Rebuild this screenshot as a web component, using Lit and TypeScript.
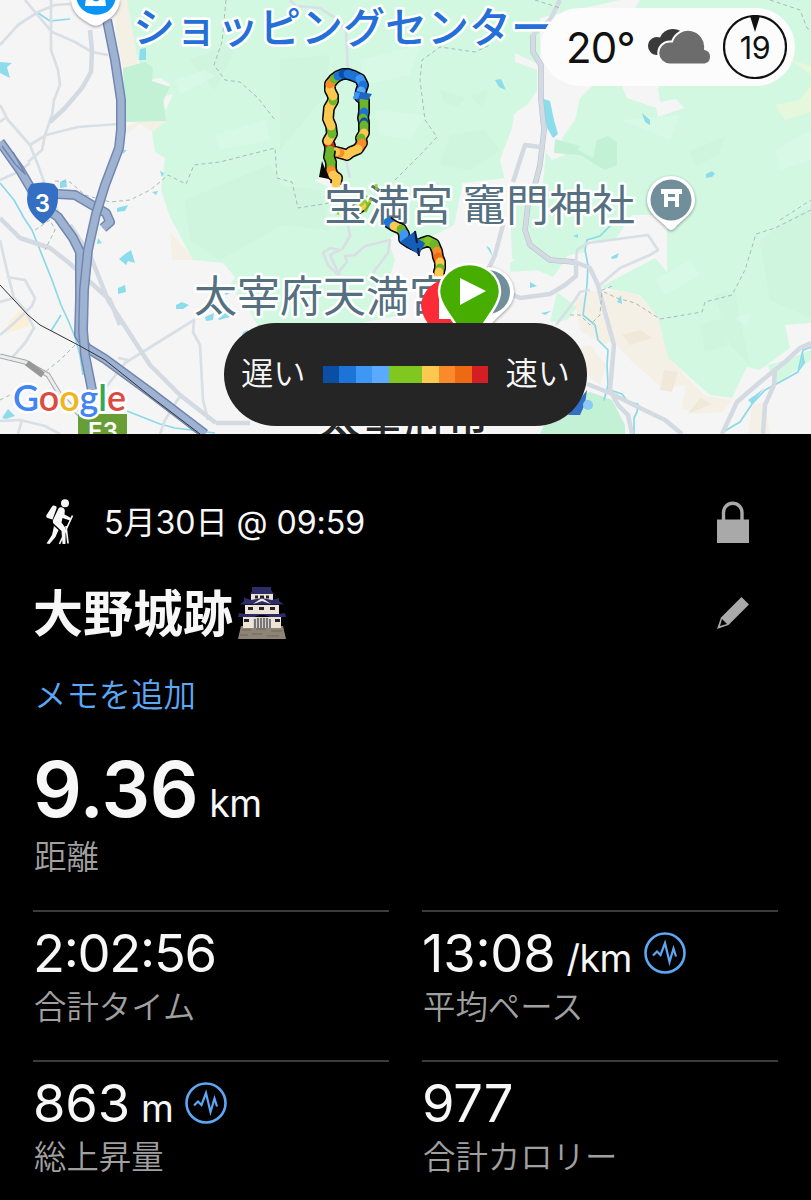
import { LitElement, html, svg, css } from 'lit';
import { customElement, property } from 'lit/decorators.js';

const BLUE4 = '#0b4ea6';
const BLUE3 = '#1c74d6';
const BLUE2 = '#3f97f5';
const BLUE1 = '#5aabff';
const GREEN = '#80c81f';
const LEAF = '#6db52b';
const YELLOW = '#fdc84f';
const ORANGE = '#fb8a2b';
const DEEP = '#ee6a12';
const RED = '#d31f24';

const LEGEND = [BLUE4, BLUE3, BLUE2, BLUE1, GREEN, GREEN, YELLOW, ORANGE, DEEP, RED];

// x, y, colour of the piece that ends at this point
type Point = [number, number, string];

const LOOP: Point[] = [
  [330, 152, ''], [330, 146, LEAF], [328, 141, RED], [332, 134, YELLOW], [331, 126, LEAF],
  [328, 119, YELLOW], [329, 108, YELLOW], [333, 101, YELLOW], [333, 96, LEAF], [330, 90, YELLOW],
  [330, 84, YELLOW], [334, 79, ORANGE], [338, 76, LEAF], [343, 74, BLUE3], [348, 74, BLUE4],
  [354, 76, BLUE3], [360, 79, BLUE3], [363, 85, BLUE2], [361, 91, BLUE3], [360, 97, BLUE1],
  [364, 100, BLUE4], [364, 112, LEAF], [363, 118, BLUE3], [364, 122, LEAF], [364, 125, BLUE4],
  [364, 133, LEAF], [361, 138, YELLOW], [362, 143, LEAF], [358, 149, ORANGE], [351, 152, YELLOW],
  [347, 155, YELLOW], [340, 153, YELLOW], [336, 152, ORANGE], [330, 152, YELLOW],
];

const TRAIL: Point[] = [
  [330, 150, ''], [329, 157, LEAF], [331, 162, LEAF], [331, 170, LEAF], [333, 175, ORANGE],
  [337, 178, YELLOW], [336, 184, YELLOW],
];

const LOWER: Point[] = [
  [388, 222, ''], [394, 226, BLUE3], [401, 229, YELLOW], [404, 234, LEAF], [404, 239, BLUE2],
  [410, 243, BLUE2], [416, 246, BLUE3], [422, 243, BLUE3], [428, 241, LEAF], [434, 244, GREEN],
  [437, 251, LEAF], [438, 257, ORANGE], [440, 262, DEEP], [440, 268, YELLOW], [439, 272, LEAF],
  [439, 278, YELLOW],
];

const toPath = (points: Point[]) => 'M' + points.map(([x, y]) => `${x} ${y}`).join('L');

const route = (points: Point[]) => svg`
  <path class="route-edge" d=${toPath(points)}></path>
  ${points.slice(1).map((p, i) => svg`
    <path class="route-piece" stroke=${p[2]} d="M${points[i][0]} ${points[i][1]}L${p[0]} ${p[1]}"></path>
  `)}
`;

@customElement('activity-map')
export class ActivityMap extends LitElement {
  static styles = css`
    :host {
      display: block;
    }
    svg {
      display: block;
      width: 100%;
      height: 100%;
    }
    text {
      font-family: "Noto Sans CJK JP", sans-serif;
      paint-order: stroke;
      stroke-linejoin: round;
    }
    path {
      stroke-linejoin: round;
    }
    .park { fill: #d3f8e2; }
    .park-dark { fill: #c3f1d5; }
    .shade { fill: #cbf1db; opacity: 0.5; }
    .light { fill: #dbfae8; opacity: 0.6; }
    .gap { fill: #f5f5f5; }
    .sand { fill: #f5f0e5; }
    .sand-dark { fill: #f0e9da; }
    .water { fill: #8ddcec; }
    .river { fill: none; stroke: #8bd9e8; stroke-width: 1.7; }
    .road { fill: none; stroke: #d8dfe5; stroke-width: 2.7; }
    .road-wide { fill: none; stroke: #d3dae1; stroke-width: 4.5; }
    .road-edge { fill: none; stroke: #b3bec9; stroke-width: 5.5; }
    .highway-edge { fill: none; stroke: #7286b1; stroke-width: 10; }
    .highway { fill: none; stroke: #9eb2d1; stroke-width: 7; }
    .rail { fill: none; stroke: #333; stroke-width: 1; }
    .line { fill: none; stroke: #a4a8aa; stroke-width: 5; }
    .line-in { fill: none; stroke: #ececec; stroke-width: 3; }
    .border { fill: none; stroke: #a9bbb2; stroke-width: 1; stroke-dasharray: 4 3; }
    .route-edge { fill: none; stroke: #080808; stroke-width: 12; }
    .route-piece { fill: none; stroke-width: 8.8; stroke-linecap: round; }
    .mall { font-size: 42px; font-weight: 500; fill: #256fd9; stroke: #fff; stroke-width: 5; }
    .shrine { font-size: 43px; fill: #557080; stroke: #fff; stroke-width: 5; }
    .city { font-size: 42px; font-weight: 500; fill: #26282b; stroke: #fff; stroke-width: 4; }
    .shield { font: 600 24px Inter, sans-serif; fill: #fff; text-anchor: middle; }
    .google { font: 600 37px Lato, sans-serif; stroke: #fff; stroke-width: 5; }
    .pin { filter: drop-shadow(0 1px 1.5px rgba(0, 0, 0, 0.4)); }
  `;

  render() {
    return html`
      <svg viewBox="0 0 811 434">
        <rect width="811" height="434" fill="#f5f5f5"></rect>

        <path class="sand" d="M114 0H130L138 68L123 69L117 40Z M125 127L143 120L166 121L158 135L140 124L127 134Z M170 232L195 260L172 260Z"></path>
        <path class="park" d="M127 0H811V323L785 325L790 348L760 370L747 367L732 398L710 395L668 358L658 318L640 295L600 287L655 258L667 272V215L632 215L615 240L600 243L585 238L584 250L567 256L554 276L540 270L510 272L510 245L535 215L540 160V86L512 128L500 160L507 178L463 183L454 225L425 240L400 245L410 275L385 285L402 315L345 326H258L243 300L228 288L235 277L223 263L193 260L170 217L161 190L165 158L155 152L152 132L166 121L137 57Z"></path>
        <path class="gap" d="M540 18L620 0H640L634 10L660 86L658 88L660 102L676 99L684 108L658 117L656 108L627 98L622 86L592 86L580 98L575 120L562 138L565 155L552 160L546 152L540 215L514 260L500 272L470 260L465 240L462 183L505 180L500 160L520 152L537 126L512 129L514 114L537 98V70L515 62V53L540 65Z"></path>
        <path class="gap" d="M151 80L160 78L170 84L168 88L151 83Z M166 96L173 94L166 110L163 104Z M314 180L328 175L345 186L334 190Z M388 240L408 226L425 265L462 262L455 326H410L400 300L385 292L395 260Z"></path>
        <path class="park" d="M510 205L544 190L575 195L618 225L606 241L588 237L584 252L567 256L553 277L532 268L512 258Z"></path>
        <path class="park-dark" d="M123 68L145 62L153 68L152 81L170 87L163 100L166 121L125 122Z M555 139L580 146L578 150L593 158L597 140L608 136L617 142V165L605 170L580 155L554 153Z"></path>
        <path class="park" d="M557 292L577 307L567 320L550 322Z M768 365L786 360L811 350V360L775 385Z"></path>
        <path class="park-dark" d="M556 400L590 392L612 400L625 425V434H540Z"></path>
        <path class="sand" d="M575 300L590 291H625L640 296L658 318L668 358L704 395L732 400L723 412L695 414L682 408L686 385L662 388L632 362L612 340L603 345L580 330Z M570 350L590 345L606 365L600 385L590 378Z M752 405L765 402L770 434H748Z"></path>
        <path class="sand-dark" d="M622 335L640 330L652 338L630 345Z M664 370L678 372L672 392L660 390Z M700 398L712 404L688 414Z"></path>
        <path fill="#fbf0d6" d="M10 320L25 306L30 325L5 334Z"></path>
        <path fill="#e5f8db" d="M775 105L800 100L811 85V112L785 120Z M790 60L811 66V74Z"></path>

        <path class="shade" d="M280 60L330 55L325 95L280 150Z M185 200L270 165L300 215L220 260L190 240Z M270 185L320 190L330 230L280 225Z M440 90L465 98L457 106L445 103Z M450 135L485 130L500 150L470 170L440 165Z M470 95L488 90L482 108Z M690 151L725 137L718 155L695 166Z M715 295L735 290L742 330L750 365L730 345Z M760 240L811 205V318L770 300Z M700 325L722 318L728 345L705 352Z M190 60L240 40L215 90Z"></path>
        <path class="light" d="M175 80L205 70L215 76L180 95Z M215 135L265 120L270 140L220 150Z M360 60L420 45L410 75L365 85Z M375 110L425 115L410 140L380 135Z M620 120L680 115L670 140Z M655 280L690 260L700 275L665 295Z M735 318L752 312L746 326Z M775 150L811 130V160L780 170Z M700 20L745 10L735 40Z"></path>

        <path class="water" d="M140 49L146 48V60L139 60Z M0 62L12 63L7 67L10 78L0 73Z M60 182L66 179L67 187L60 188Z M122 150H127L123 154Z M160 171L164 173L162 177Z M152 192L158 191L156 195Z M117 208L128 205L125 211L117 212Z M98 238L102 243L97 244Z M125 254L131 250L135 263L128 261L126 265L119 259Z M118 288L125 285L126 292L118 294Z M176 305L182 302L189 305L183 309H176Z M205 317L214 313L213 320L206 321Z M218 319L226 310L230 317L219 320Z M243 332L248 330V335L242 336Z M224 292L230 293L226 295Z M2 418L8 409L15 416L6 419Z M495 80L501 79L506 90L499 87Z M541 98L550 101L554 120L558 134L553 138L547 128Z M642 113L650 120V125L645 122Z M706 174L712 171L715 174L712 177L706 178Z M486 246L490 248L493 257Z M573 236L578 234V238Z M611 257L619 253L617 258L612 259Z M530 282L537 286L530 288Z M541 313L551 311L545 315Z M617 302L621 295L622 304Z M801 365L803 352L805 363L800 370L780 383L797 372Z M748 400L758 393L764 388L752 404Z"></path>

        <path class="river" d="M0 183L14 200L23 216 M22 215L32 230L40 250L52 280L61 305L68 320L75 337L80 355L83 375 M61 315L51 331 M127 411L160 424L175 428L215 433 M38 13L50 21L70 19"></path>
        <path class="river" d="M611 225L600 236L587 240L585 250L588 265L587 285L583 315L595 325L598 340L608 350L607 365L608 385L604 400L607 390 M610 390L622 394L628 402L638 404L637 412L634 418V434 M723 432L740 422L752 404L765 390L780 382L798 372L803 350L811 347"></path>

        <path class="road" d="M0 45L18 25L38 12L55 5L70 4 M25 0L40 18L52 32L75 42L92 52L108 55 M51 0V50L58 70L60 85L54 100L52 115L45 135L42 150L28 162 M30 145L46 135L78 127L118 124 M0 122L5 118 M0 105L8 120L30 145L38 165L47 190L65 225 M0 180L18 172L30 163"></path>
        <path class="road" d="M0 240L8 275L14 298L0 302 M7 277L25 280L35 298L32 306L12 325L0 335 M14 298L25 310L34 328L25 343L10 360 M0 421L20 420L45 426L60 434 M100 395L125 363L194 320L193 332L200 345L203 400L208 420 M118 358L128 360 M180 396L165 420L160 434 M290 0L296 6L320 8L335 18L346 30L348 72 M346 160L350 178 M22 420L18 434"></path>
        <path class="road" d="M340 275L337 270L330 255L340 250L330 248L323 253L328 265L337 274L347 262L345 256L355 255L365 246L390 240L388 253L375 270L370 280 M348 225L350 236L342 250"></path>
        <path class="road-wide" d="M90 30L92 50L91 72L82 88L65 108L50 122 M0 218L20 238L50 248L68 262L110 300L120 325 M70 225L90 255L108 300L150 365L180 395L216 423 M216 423H250"></path>
        <path class="road-edge" d="M533 35V52L541 65V100L544 130L540 165L535 185L528 205L525 230L530 245L550 260L575 262"></path>
        <path class="road-wide" d="M560 0L550 20L533 35V52L541 65V100L544 130L540 165L535 185L528 205L525 230L530 245L550 260L575 262L590 268L598 285L603 305L614 345L610 390L618 405L628 415L632 434 M503 225L495 255L488 270 M540 147L525 145L513 182 M576 262V276L565 285L550 294L520 298L490 285"></path>
        <path class="road" d="M590 290L580 292L575 300L556 325 M576 262L577 250L588 243L648 235L658 250L650 255L620 268L600 285"></path>
        <path class="road-wide" d="M587 384L610 393L640 408L665 420L682 434 M722 434L737 402L760 382L785 362L800 348L811 343 M775 370L774 385L765 405L763 434"></path>
        <path class="border" d="M226 0L222 42L214 65L225 80L240 82L258 98L275 120 M55 181L70 182L85 195L110 202L130 200L150 190L160 182L168 175L186 184L194 165L220 162L275 148L277 178L292 182L298 208L330 203 M395 180L420 155L437 137L425 120L420 80L422 60L440 47L475 52L490 45 M535 0L560 8 M770 0L800 10L807 28L811 30 M780 220L811 200 M811 210L775 228L756 234L745 270L732 295L705 302L702 312L660 319L635 303L617 298L604 292 M570 315H580L590 325L600 315L602 290L615 285 M75 345L60 360L45 372 M0 400L10 395 M35 230L50 220L55 230L45 250"></path>

        <path class="line" d="M0 356L25 362L48 375L60 395L80 415"></path>
        <path class="line-in" d="M0 356L25 362L48 375L60 395L80 415"></path>
        <path d="M27 363L43 375" stroke="#989898" stroke-width="6"></path>

        <path class="highway-edge" d="M58 194L75 195L92 205L106 213L110 222L103 228 M0 142L20 170L33 192L45 208L58 217L73 238L80 252V300L79 335L87 348L105 359L150 392L205 434"></path>
        <path class="highway" d="M58 194L75 195L92 205L106 213L110 222L103 228 M0 142L20 170L33 192L45 208L58 217L73 238L80 252V300L79 335L87 348L105 359L150 392L205 434"></path>
        <path class="highway-edge" d="M107 20L115 60L121 100V130L119 148L105 185L96 214L88 250L84 290L83 330L85 355L92 390"></path>
        <path class="highway" d="M107 20L115 60L121 100V130L119 148L105 185L96 214L88 250L84 290L83 330L85 355L92 390"></path>
        <path d="M2 146L15 164L25 174L13 152" fill="none" stroke="#7286b1" stroke-width="1.5"></path>
        <path class="rail" d="M0 285L28 315L40 325L80 346L105 360L150 396L200 434"></path>

        <path d="M28 189L31 184Q43 181 54 184L58 189V199C58 211 49 220 43 224C37 220 27 211 27 199Z" fill="#356fc4"></path>
        <text class="shield" x="42.500" y="212">3</text>
        <rect x="78" y="414" width="49" height="22" fill="#679f36"></rect>
        <text class="shield" x="103" y="440">E3</text>

        <g class="pin">
          <path d="M71 0C72 12 80 18 87 22C94 27 98 27 104 22C111 18 119 12 120 0Z" fill="#fff"></path>
        </g>
        <path d="M76 -4C78 20 114 22 116 -4Z" fill="#0c94f5"></path>
        <path d="M86 -2L85 6H106L105 -2Z" fill="#fff"></path>
        <path d="M92 -4C92 2 100 2 100 -4" fill="none" stroke="#0c94f5" stroke-width="2"></path>

        <text class="mall" x="133" y="43" textLength="420">ショッピングセンター</text>

        <path d="M322 161L319 177L329 179Z" fill="#080808"></path>
        ${route(LOOP)}
        ${route(TRAIL)}
        <path d="M353 98L356 91L372 94L368 100Z" fill="#1f66c2"></path>
        <path d="M353 99L355 92L360 93L358 99Z" fill="#3f97f5"></path>
        ${route([[366, 200, ''], [362, 206, GREEN], [355, 210, YELLOW]])}
        <text class="shrine" x="324" y="221" textLength="311">宝満宮 竈門神社</text>
        <path d="M360 206L366 200 M337 213L339 214 M376 184L377 190 M365 212L371 199" stroke="#8eca25" stroke-width="3" opacity="0.8"></path>
        ${route(LOWER)}
        <path d="M415 231L418 239L425 243L419 255L408 247L400 242Z" fill="#155db7"></path>
        <path d="M415 231L417 243 M418 248L419 256" stroke="#0a1830" stroke-width="2"></path>

        <g class="pin">
          <path d="M671 176A24 24 0 0 1 695 200C695 214 681 220 675 228Q671 232 667 228C661 220 647 214 647 200A24 24 0 0 1 671 176Z" fill="#fff"></path>
        </g>
        <circle cx="671" cy="200" r="20.500" fill="#718e9b"></circle>
        <path d="M661 189H682V194H679V207H675V201H668V207H664V194H661Z M668 194V197H675V194Z" fill="#fff" fill-rule="evenodd"></path>

        <text class="shrine" x="194" y="312" textLength="258">太宰府天満宮</text>
        <g class="pin">
          <path d="M488 267A26 26 0 0 1 514 292C514 308 500 312 490 326H470Z" fill="#fff"></path>
        </g>
        <circle cx="488" cy="292" r="22" fill="#718e9b"></circle>
        <path d="M450 279A29 29 0 0 0 421 304C421 314 426 320 430 327H470V279Z" fill="#fb2c36"></path>
        <path d="M439 288V319H458V305H445V288Z" fill="#fff"></path>
        <path d="M469.500 264A30.500 28 0 0 1 500 291C500 304 488 316 482 327H457C451 316 439 304 439 291A30.500 28 0 0 1 469.500 264Z" fill="#47ad00" stroke="#fff" stroke-width="2.500"></path>
        <path d="M460 278L486 291L460 305Z" fill="#fff"></path>

        <path d="M572 410L587 390L585 404L580 415H568Z" fill="#346fc6"></path>
        <circle cx="588" cy="405" r="5" fill="#8cc9f5"></circle>
        <text class="city" x="319" y="434" textLength="170">太宰府市</text>

        <text class="google" x="13" y="411" textLength="113" lengthAdjust="spacingAndGlyphs"
          ><tspan fill="#4285f4">G</tspan><tspan fill="#dd4b3e">o</tspan><tspan fill="#f2b41b">o</tspan><tspan fill="#4285f4">g</tspan><tspan fill="#34a853">l</tspan><tspan fill="#dd4b3e">e</tspan></text>
      </svg>
    `;
  }
}

@customElement('stat-item')
export class StatItem extends LitElement {
  static styles = css`
    :host {
      display: block;
    }
    .row {
      display: flex;
      align-items: center;
      height: 60px;
    }
    .figures {
      display: flex;
      align-items: baseline;
      line-height: 60px;
    }
    .value {
      font-size: 52.5px;
      letter-spacing: -0.2px;
      font-feature-settings: "case";
    }
    :host([tight]) .value {
      letter-spacing: -1.3px;
    }
    .unit {
      font-size: 37.5px;
      line-height: 40px;
      margin-left: 11px;
      letter-spacing: -0.6px;
    }
    .label {
      margin-top: 5px;
      padding-left: 1px;
      font-size: 32.4px;
      font-weight: 350;
      line-height: 40px;
      color: #a0a0a0;
    }
    .trend {
      width: 42px;
      height: 42px;
      margin-left: 12px;
    }
    :host([large]) .row {
      height: 70px;
    }
    :host([large]) .figures {
      line-height: 70px;
    }
    :host([large]) .value {
      font-size: 76.5px;
      font-weight: 600;
      letter-spacing: -0.4px;
    }
    :host([large]) .label {
      margin-top: 14px;
    }
  `;

  @property() value = '';
  @property() unit = '';
  @property() label = '';
  @property({ type: Boolean }) trend = false;
  @property({ type: Boolean, reflect: true }) large = false;
  @property({ type: Boolean, reflect: true }) tight = false;

  render() {
    return html`
      <div class="row">
        <div class="figures">
          <span class="value">${this.value}</span>
          ${this.unit ? html`<span class="unit">${this.unit}</span>` : ''}
        </div>
        ${this.trend ? html`
          <svg class="trend" viewBox="0 0 42 42" fill="none" stroke="#5ca8f5">
            <circle cx="21" cy="21" r="19.500" stroke-width="2.600"></circle>
            <path d="M9 23.500L13 19.500L16.500 23L21 11L25.500 30L29.500 16.500L32 24.500" stroke-width="2.200"></path>
          </svg>
        ` : ''}
      </div>
      <div class="label">${this.label}</div>
    `;
  }
}

@customElement('app-root')
export class AppRoot extends LitElement {
  static styles = css`
    :host {
      display: block;
      width: 811px;
      height: 1200px;
      overflow: hidden;
      background: #000;
      color: #f7f7f7;
      font-family: Inter, "Noto Sans CJK JP", sans-serif;
    }
    .map {
      position: relative;
      height: 434px;
    }
    activity-map {
      height: 434px;
    }
    .weather {
      position: absolute;
      top: 8px;
      right: 16px;
      width: 254px;
      height: 78px;
      box-sizing: border-box;
      padding: 0 8px 0 25px;
      border-radius: 39px;
      background: #fcfcfc;
      color: #111;
      display: flex;
      align-items: center;
    }
    .degrees {
      width: 82px;
      font-size: 42px;
      letter-spacing: -0.8px;
    }
    .cloud {
      width: 66px;
      height: 38px;
    }
    .wind {
      position: relative;
      width: 64px;
      height: 64px;
      margin-left: auto;
      display: flex;
      align-items: center;
      justify-content: center;
      font-size: 30.5px;
      letter-spacing: -0.3px;
    }
    .wind svg {
      position: absolute;
      inset: 0;
    }
    .legend {
      position: absolute;
      left: 224px;
      bottom: 8px;
      width: 363px;
      height: 103px;
      border-radius: 52px;
      background: #252525;
      display: flex;
      align-items: center;
      justify-content: center;
      gap: 17px;
      font-size: 32.3px;
      font-weight: 350;
    }
    .legend span {
      line-height: 40px;
      margin-bottom: 2px;
    }
    .scale {
      display: flex;
      width: 166px;
      height: 17px;
    }
    .scale i {
      flex: 1;
    }
    .details {
      padding: 66px 33px 0;
    }
    .head,
    .title {
      display: flex;
      align-items: center;
    }
    .head {
      height: 44px;
      padding: 0 28px 0 11px;
    }
    .hiker {
      width: 34px;
      height: 46px;
    }
    .date {
      margin: 2px 0 0 26px;
      font-size: 32.2px;
      line-height: 40px;
      letter-spacing: -0.1px;
    }
    .action {
      margin-left: auto;
    }
    .title {
      height: 60px;
      margin-top: 39px;
      padding: 0 28px 0 0;
      font-size: 50px;
      font-weight: 700;
    }
    .title span {
      line-height: 60px;
      margin-top: 2px;
    }
    .castle {
      width: 48px;
      height: 52px;
      margin-left: 5px;
    }
    .memo {
      margin-top: 33px;
      padding-left: 1px;
      font-size: 32.4px;
      font-weight: 350;
      line-height: 40px;
      color: #5ba8f7;
    }
    .distance {
      margin-top: 38px;
    }
    .grid {
      display: grid;
      grid-template-columns: 1fr 1fr;
      column-gap: 33px;
      margin-top: 32px;
    }
    .grid stat-item {
      box-sizing: border-box;
      height: 150px;
      padding-top: 11px;
      border-top: 2px solid #3c3c3c;
    }
  `;

  render() {
    return html`
      <div class="map">
        <activity-map></activity-map>
        <div class="weather">
          <span class="degrees">20°</span>
          <svg class="cloud" viewBox="0 0 66 38">
            <path d="M9 27A9 9 0 1 1 12 9.500A14 14 0 0 1 37 8V27Z" fill="#3a3a3a"></path>
            <path d="M22 36.500A11.500 11.500 0 0 1 21.500 13.500H24A17 17 0 0 1 57 21A8 8 0 0 1 57 36.500Z" fill="#6c6c6c" stroke="#fcfcfc" stroke-width="2"></path>
          </svg>
          <div class="wind">
            <svg viewBox="0 0 64 64">
              <circle cx="32" cy="32" r="31" fill="none" stroke="#111" stroke-width="2.200"></circle>
              <path d="M27 1H37L32 17Z" fill="#111"></path>
            </svg>
            19
          </div>
        </div>
        <div class="legend">
          <span>遅い</span>
          <div class="scale">${LEGEND.map(c => html`<i style="background:${c}"></i>`)}</div>
          <span>速い</span>
        </div>
      </div>

      <div class="details">
        <div class="head">
          <svg class="hiker" viewBox="0 0 34 46" fill="#f7f7f7">
            <circle cx="21" cy="4.200" r="4"></circle>
            <path d="M8 7.500Q9 6 11.500 7Q13 7.500 12.500 9.500L8.500 20.500L3.500 19Q1.500 18 2.500 16Z"></path>
            <path d="M14.500 9.500Q16 7.500 18.500 8.500Q21 9.500 20.800 12L20.500 15.500L27 19L26 21.500L18.500 19L17.500 23.500L21.500 29L21.500 45H18.500L17.500 32L9.500 24.500Q8.500 23 9 21Z"></path>
            <path d="M10 27L14.500 31L11.500 38L5.500 45L2.500 44.500L8 36Z"></path>
            <path d="M28.500 16.500L15.500 45M22 27L24 44.500" stroke="#f7f7f7" stroke-width="1.700"></path>
          </svg>
          <span class="date">5月30日 @ 09:59</span>
          <svg class="action" width="34" height="42" viewBox="0 0 34 42">
            <path d="M7.500 20V11.500A9 9 0 0 1 26 11.500V20" fill="none" stroke="#a9a9a9" stroke-width="3.400"></path>
            <rect x="1" y="18.500" width="32" height="23.500" fill="#a9a9a9"></rect>
          </svg>
        </div>

        <div class="title">
          <span>大野城跡</span>
          <svg class="castle" viewBox="0 0 48 52">
            <path d="M3 39H45L48 52H0Z" fill="#8d8475"></path>
            <path d="M4 43H13M18 42H28M33 44H44M2 48H10M14 47H24M29 49H41" stroke="#6f675b" stroke-width="1"></path>
            <path d="M5 30H43V41H5Z M7 18H41V27H7Z M13 7H35V15H13Z" fill="#eee4d6"></path>
            <path d="M14 0H33V3L36 7H12L14 4Z M13 13L6 10.500V14L2 17.500H46L41 14V11L34 13L24 11Z M7 27L1 26L0 30H16Q24 26 32 30H48L47 26L41 27Z" fill="#2c2c68"></path>
            <path d="M15 17L24 11L33 17L24 14Z" fill="#f4ecdf"></path>
            <path d="M15 41V32Q24 28 33 32V41Z" fill="#d9d2c6"></path>
            <path d="M17 41V32M20 41V31M23 41V31M26 41V31M29 41V31M32 41V32" stroke="#454455" stroke-width="1.300"></path>
            <path d="M17 8.500H20V11.500H17Z M22 8.500H26V11.500H22Z M28 8.500H31V11.500H28Z M10 20H15V23H10Z M21 20H26V23H21Z M32 20H37V23H32Z M6 32H11V35H6Z M37 32H42V35H37Z" fill="#22222d"></path>
          </svg>
          <svg class="action" width="34" height="34" viewBox="0 0 34 34" fill="#a9a9a9">
            <path d="M25.500 1L33 8.500L12.500 29L1 33L5 21.500Z"></path>
            <path d="M6 23L11 28L4 30Z" fill="#000"></path>
          </svg>
        </div>

        <div class="memo">メモを追加</div>

        <stat-item class="distance" large value="9.36" unit="km" label="距離"></stat-item>

        <div class="grid">
          <stat-item value="2:02:56" label="合計タイム" tight></stat-item>
          <stat-item value="13:08" unit="/km" label="平均ペース" trend></stat-item>
          <stat-item value="863" unit="m" label="総上昇量" trend></stat-item>
          <stat-item value="977" label="合計カロリー"></stat-item>
        </div>
      </div>
    `;
  }
}
